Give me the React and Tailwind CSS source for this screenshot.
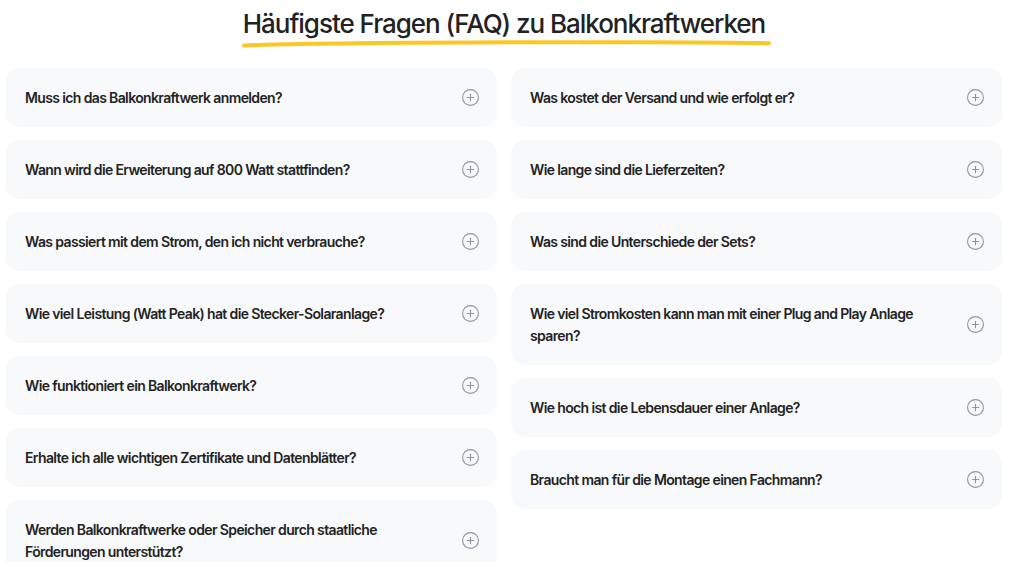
import React from 'react';
import { CirclePlus } from 'lucide-react';

const leftQuestions = [
  'Muss ich das Balkonkraftwerk anmelden?',
  'Wann wird die Erweiterung auf 800 Watt stattfinden?',
  'Was passiert mit dem Strom, den ich nicht verbrauche?',
  'Wie viel Leistung (Watt Peak) hat die Stecker-Solaranlage?',
  'Wie funktioniert ein Balkonkraftwerk?',
  'Erhalte ich alle wichtigen Zertifikate und Datenblätter?',
  'Werden Balkonkraftwerke oder Speicher durch staatliche Förderungen unterstützt?',
];

const rightQuestions = [
  'Was kostet der Versand und wie erfolgt er?',
  'Wie lange sind die Lieferzeiten?',
  'Was sind die Unterschiede der Sets?',
  'Wie viel Stromkosten kann man mit einer Plug and Play Anlage sparen?',
  'Wie hoch ist die Lebensdauer einer Anlage?',
  'Braucht man für die Montage einen Fachmann?',
];

const FaqItem = ({ question }) => (
  <div className="flex items-center justify-between gap-6 rounded-[14px] bg-[#f8f9fb] pl-[19px] pr-[17px] py-[18.5px]">
    <span className="max-w-[395px] text-[14px] leading-[22px] font-semibold tracking-[-0.045em] text-[#232323]">
      {question}
    </span>
    <CirclePlus size={19} strokeWidth={1.4} className="shrink-0 text-[#8c94a5]" />
  </div>
);

const App = () => {
  return (
    <div className="min-h-screen bg-white font-['Inter','Noto_Sans',sans-serif]">
      <div className="mx-[6px] w-[996px]">
        <div className="flex justify-center pt-[6px]">
          <div className="relative">
            <h2 className="text-[26px] leading-[36px] font-medium tracking-[-0.04em] text-[#222222]">
              Häufigste Fragen (FAQ) zu Balkonkraftwerken
            </h2>
            <svg
              className="absolute left-[-2px] top-[33px]"
              width="532"
              height="10"
              viewBox="0 0 532 10"
              fill="none"
            >
              <path
                d="M3 6.5 C 90 3.5, 250 3, 400 3.2 C 460 3.3, 505 3.6, 528 4.2"
                stroke="#fcc624"
                strokeWidth="4"
                strokeLinecap="round"
              />
            </svg>
          </div>
        </div>
        <div className="mt-[26px] grid grid-cols-2 gap-[14px] items-start">
          <div className="flex flex-col gap-[13px]">
            {leftQuestions.map((q) => (
              <FaqItem key={q} question={q} />
            ))}
          </div>
          <div className="flex flex-col gap-[13px]">
            {rightQuestions.map((q) => (
              <FaqItem key={q} question={q} />
            ))}
          </div>
        </div>
      </div>
    </div>
  );
};

export default App;
